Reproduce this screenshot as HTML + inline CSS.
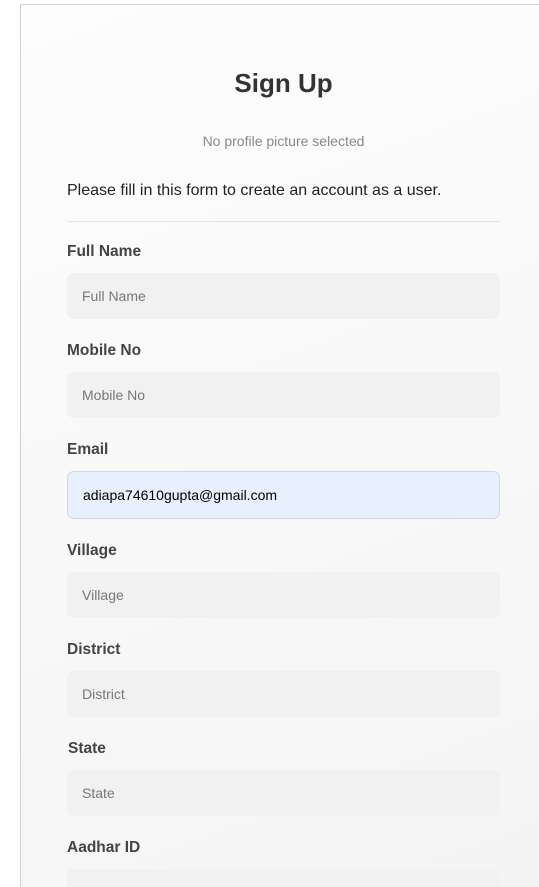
<!DOCTYPE html>
<html><head><meta charset="utf-8"><style>
*{box-sizing:border-box;margin:0;padding:0}
html,body{width:539px;height:887px;overflow:hidden;background:#fff;font-family:"Liberation Sans",Arial,sans-serif;position:relative}
.card{position:absolute;left:20px;top:4px;width:519px;height:883px;border:1px solid #cfcfcf;border-right:none;border-bottom:none;background:linear-gradient(160deg,#fdfdfd,#f4f4f4)}
h1{position:absolute;left:0;width:567px;top:67px;text-align:center;font-size:26px;font-weight:bold;color:#333;line-height:32px}
.np{position:absolute;left:0;width:567px;top:133px;text-align:center;font-size:14px;color:#888;line-height:16px}
.intro{position:absolute;left:67px;top:182px;font-size:16px;color:#222;line-height:18px}
.hr{position:absolute;left:67px;top:221px;width:433px;height:1px;background:#e3e3e3}
.lbl{position:absolute;left:67px;font-size:15.5px;font-weight:bold;color:#444;line-height:18px}
.in{position:absolute;left:67px;width:433px;height:46px;border-radius:7px;background:#f1f1f1;color:#777;font-size:14px;line-height:46px;padding-left:15px}
.in.em{background:#e8f0fe;border:1px solid #d2d8e2;height:48px;line-height:46px;color:#000;padding-left:15px}
</style></head><body>
<div class="card"></div>
<h1>Sign Up</h1>
<div class="np">No profile picture selected</div>
<div class="intro">Please fill in this form to create an account as a user.</div>
<div class="hr"></div>
<div class="lbl" style="top:243px">Full Name</div><div class="in" style="top:273px">Full Name</div>
<div class="lbl" style="top:342px">Mobile No</div><div class="in" style="top:372px">Mobile No</div>
<div class="lbl" style="top:441px">Email</div><div class="in em" style="top:471px">adiapa74610gupta@gmail.com</div>
<div class="lbl" style="top:542px">Village</div><div class="in" style="top:572px">Village</div>
<div class="lbl" style="top:641px">District</div><div class="in" style="top:671px">District</div>
<div class="lbl" style="top:740px;left:68px">State</div><div class="in" style="top:770px">State</div>
<div class="lbl" style="top:839px">Aadhar ID</div><div class="in" style="top:869px;height:18px;border-radius:7px 7px 0 0"></div>
</body></html>
